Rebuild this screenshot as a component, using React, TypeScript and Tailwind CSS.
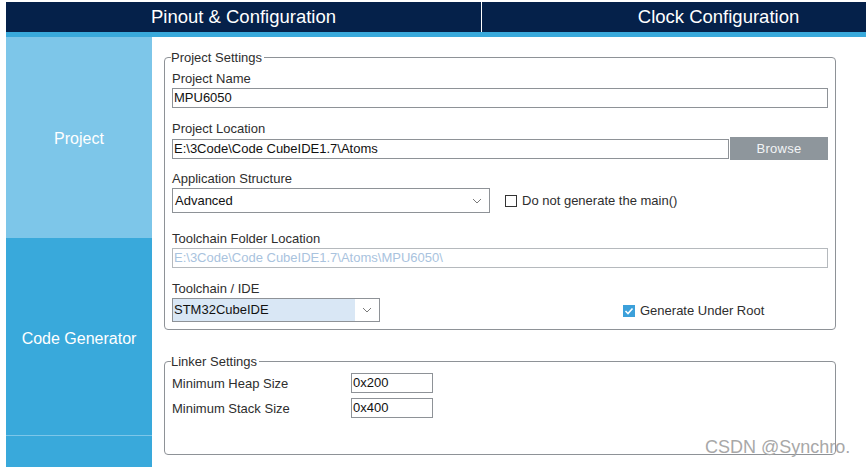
import React from 'react';

const Label: React.FC<{ className?: string; children: React.ReactNode }> = ({ className = '', children }) => (
  <div className={`h-[15px] text-[13px] leading-[15px] text-[#2e2e2e] ${className}`}>{children}</div>
);

const Chevron: React.FC = () => (
  <svg width="10" height="6" viewBox="0 0 10 6" className="shrink-0">
    <path d="M1 1 L5 5 L9 1" fill="none" stroke="#7a7a7a" strokeWidth="1" />
  </svg>
);

export default function App() {
  return (
    <div className="relative h-[467px] w-[866px] overflow-hidden bg-white pl-[6px] pt-[2px] font-['Liberation_Sans',Arial,sans-serif]">
      {/* Top tabs */}
      <header className="flex h-[30px] overflow-hidden bg-[#05214a] text-[18.5px] text-white">
        <div className="flex w-[475px] shrink-0 items-center justify-center">Pinout &amp; Configuration</div>
        <div className="w-px shrink-0 bg-white" />
        <div className="flex w-[473px] shrink-0 items-center justify-center">Clock Configuration</div>
      </header>
      <div className="h-[5px] bg-[#39a9db]" />

      <div className="flex">
        {/* Side nav */}
        <aside className="flex w-[146px] shrink-0 flex-col text-[16px] text-white">
          <div className="flex h-[201px] items-center justify-center bg-[#7dc6e9] pt-[2px]">Project</div>
          <div className="flex h-[198px] items-center justify-center border-b border-[#7dc6e9] bg-[#39a9db] pt-[4px]">Code Generator</div>
          <div className="h-[40px] bg-[#39a9db]" />
        </aside>

        {/* Settings */}
        <main className="flex-1 pl-[12px] pr-[30px] pt-[13px]">
          <fieldset className="rounded-[4px] border border-[#8e9297] px-[7px] pb-[7px]">
            <legend className="-ml-[1px] pr-[2px] text-[13px] leading-[15px] text-[#2e2e2e]">Project Settings</legend>
            <div className="flex flex-col">
              <Label className="mt-[6px]">Project Name</Label>
              <div className="mt-[2px] flex h-[20px] items-center border border-[#8e9297] pl-[1px] text-[13px] text-[#111]">MPU6050</div>

              <Label className="mt-[13px]">Project Location</Label>
              <div className="mt-[1px] flex h-[23px] items-center gap-[1px]">
                <div className="flex h-[20px] flex-1 items-center border border-[#8e9297] pl-[1px] text-[13px] text-[#111]">
                  {'E:\\3Code\\Code CubeIDE1.7\\Atoms'}
                </div>
                <button className="flex h-[23px] w-[98px] items-center justify-center bg-[#8e969c] text-[13px] tracking-[0.3px] text-[#f2f4f6]">
                  Browse
                </button>
              </div>

              <Label className="mt-[11px]">Application Structure</Label>
              <div className="mt-[2px] flex h-[25px] items-center">
                <div className="flex h-[25px] w-[318px] items-center justify-between border border-[#8e9297] pl-[2px] pr-[7px] text-[13px] text-[#111]">
                  <span>Advanced</span>
                  <Chevron />
                </div>
                <div className="ml-[15px] h-[12px] w-[12px] border border-[#333] bg-white" />
                <span className="ml-[5px] text-[13px] text-[#2e2e2e]">Do not generate the main()</span>
              </div>

              <Label className="mt-[18px]">Toolchain Folder Location</Label>
              <div className="mt-[2px] flex h-[20px] items-center border border-[#b5b9bd] pl-[1px] text-[13px] text-[#a9c3de]">
                {'E:\\3Code\\Code CubeIDE1.7\\Atoms\\MPU6050\\'}
              </div>

              <Label className="mt-[13px]">Toolchain / IDE</Label>
              <div className="mt-[2px] flex h-[24px] items-center">
                <div className="flex h-[24px] w-[208px] border border-[#8e9297] text-[13px] text-[#111]">
                  <div className="flex w-[182px] items-center bg-[#d9e7f5] pl-[1px]">STM32CubeIDE</div>
                  <div className="flex flex-1 items-center justify-center">
                    <Chevron />
                  </div>
                </div>
                <div className="ml-[243px] mt-[1px] flex h-[12px] w-[12px] items-center justify-center bg-[#3ca0da]">
                  <svg width="10" height="8" viewBox="0 0 10 8">
                    <path d="M1.5 4 L4 6.5 L8.5 1.5" fill="none" stroke="white" strokeWidth="1.6" />
                  </svg>
                </div>
                <span className="ml-[5px] mt-[1px] text-[13px] text-[#2e2e2e]">Generate Under Root</span>
              </div>
            </div>
          </fieldset>

          <fieldset className="mt-[24px] rounded-[4px] border border-[#8e9297] px-[7px] pb-[36px]">
            <legend className="-ml-[1px] pr-[2px] text-[13px] leading-[15px] text-[#2e2e2e]">Linker Settings</legend>
            <div className="mt-[4px] flex flex-col gap-[5px]">
              <div className="flex h-[20px] items-center">
                <span className="w-[179px] pt-[2px] text-[13px] text-[#2e2e2e]">Minimum Heap Size</span>
                <div className="flex h-[20px] w-[82px] items-center border border-[#8e9297] pl-[1px] text-[13px] text-[#111]">0x200</div>
              </div>
              <div className="flex h-[20px] items-center">
                <span className="w-[179px] pt-[2px] text-[13px] text-[#2e2e2e]">Minimum Stack Size</span>
                <div className="flex h-[20px] w-[82px] items-center border border-[#8e9297] pl-[1px] text-[13px] text-[#111]">0x400</div>
              </div>
            </div>
          </fieldset>
        </main>
      </div>

      {/* Watermark */}
      <div className="absolute left-[705px] top-[437px] text-[18px] leading-[20px] text-[#a8a8a8]">CSDN @Synchro.</div>
    </div>
  );
}
